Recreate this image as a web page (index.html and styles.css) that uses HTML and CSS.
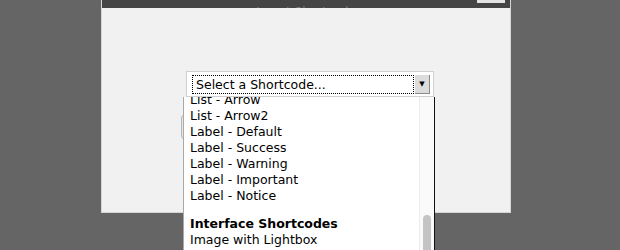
FILE: index.html
```html
<!DOCTYPE html>
<html lang="en">
  <head>
    <meta charset="UTF-8" />
    <meta name="viewport" content="width=device-width, initial-scale=1.0" />
    <title>Insert Shortcode</title>
    <link rel="stylesheet" href="styles.css">
  </head>
  <body>
    <div class="modal">
      <div class="modal-title">
        <span class="title-text">Insert Shortcode</span>
        <span class="close-btn"></span>
      </div>

      <div class="modal-body">
        <div class="picker">
          <div class="select">
            <span class="select-value">Select a Shortcode...</span>
            <span class="select-arrow">&#9660;</span>
          </div>

          <div class="insert-btn"></div>

          <div class="options">
            <ul class="options-inner">
              <li>List - Arrow</li>
              <li>List - Arrow2</li>
              <li>Label - Default</li>
              <li>Label - Success</li>
              <li>Label - Warning</li>
              <li>Label - Important</li>
              <li>Label - Notice</li>
              <li class="group">Interface Shortcodes</li>
              <li>Image with Lightbox</li>
              <li>Tabs</li>
            </ul>
            <div class="scrollbar"><div class="thumb"></div></div>
          </div>
        </div>
      </div>
    </div>
  </body>
</html>
```

FILE: styles.css
```css
html,
body {
  height: 250px;
  overflow: hidden;
}
body {
  margin: 0;
  background-color: #656565;
  font-family: "DejaVu Sans", Verdana, sans-serif;
}
.modal {
  width: 408px;
  height: 212px;
  margin-left: 101px;
  background-color: #f1f1f1;
  border: 1px solid #d6d6d6;
  border-top: none;
}
.modal-title {
  height: 8px;
  background-color: #454545;
  display: flex;
  justify-content: center;
  align-items: flex-end;
  overflow: hidden;
  position: relative;
}
.title-text {
  color: #7c7c7c;
  font-size: 12px;
  line-height: 12px;
  margin-bottom: -10px;
}
.close-btn {
  position: absolute;
  right: 5px;
  top: 0;
  width: 28px;
  height: 3px;
  background-color: #e4e4e4;
}
.modal-body {
  padding-top: 63px;
  padding-left: 84px;
}
.picker {
  position: relative;
  width: 248px;
}
.select {
  height: 26px;
  background-color: #fff;
  border: 1px solid #cfcfcf;
  display: flex;
  align-items: center;
  padding: 0 3px 0 5px;
  box-sizing: border-box;
}
.select-value {
  flex: 1;
  height: 17px;
  border: 1px dotted #000;
  font-size: 12.5px;
  line-height: 17px;
  padding-left: 3px;
  color: #000;
}
.select-arrow {
  width: 14px;
  height: 18px;
  margin-left: 1px;
  background-color: #dcdcdc;
  border-right: 1px solid #8a8a8a;
  border-bottom: 1px solid #8a8a8a;
  font-size: 7px;
  line-height: 18px;
  text-align: center;
  color: #000;
}
.insert-btn {
  margin-top: 18px;
  margin-left: -5px;
  width: 100px;
  height: 22px;
  border: 1px solid #b5b5b5;
  border-radius: 3px;
  background-color: #e9e9e9;
}
.options {
  position: absolute;
  top: 26px;
  left: -3px;
  width: 250px;
  height: 170px;
  background-color: #fff;
  border-left: 1px solid #a9a9a9;
  border-right: 1px solid #111;
  overflow: hidden;
}
.options-inner {
  list-style: none;
  margin: -5px 0 0 0;
  padding: 0 0 0 6px;
  font-size: 12.5px;
  line-height: 16px;
  color: #000;
}
.options-inner .group {
  margin-top: 12px;
  font-weight: bold;
}
.scrollbar {
  position: absolute;
  top: 0;
  right: 0;
  width: 14px;
  height: 100%;
  background-color: #fafafa;
  border-left: 1px solid #ececec;
}
.thumb {
  margin: 118px 0 0 3px;
  width: 8px;
  height: 60px;
  border-radius: 4px;
  background-color: #c4c4c4;
}
```
